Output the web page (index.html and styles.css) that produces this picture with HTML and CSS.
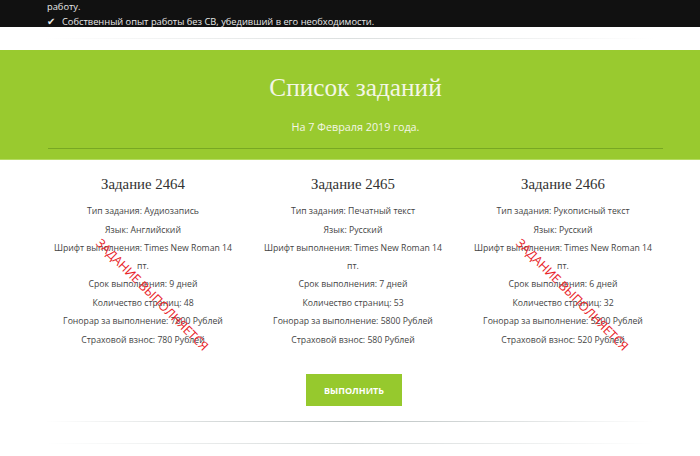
FILE: index.html
```html
<!DOCTYPE html>
<html>
<head>
    <title>Список заданий</title>
    <link rel="stylesheet" href="styles.css">
</head>
<body>
    <div class="top-bar">
        <div class="inner">
            <p class="top-line">работу.</p>
            <p class="top-line"><span class="check">&#10004;</span>Собственный опыт работы без СВ, убедивший в его необходимости.</p>
        </div>
    </div>

    <div class="fade-line top-fade"></div>

    <div class="banner">
        <div class="banner-inner">
            <h1>Список заданий</h1>
            <p class="date">На 7 Февраля 2019 года.</p>
        </div>
    </div>

    <div class="tasks">
        <div class="task">
            <h2>Задание 2464</h2>
            <p>Тип задания: Аудиозапись</p>
            <p>Язык: Английский</p>
            <p>Шрифт выполнения: Times New Roman 14 пт.</p>
            <p>Срок выполнения: 9 дней</p>
            <p>Количество страниц: 48</p>
            <p>Гонорар за выполнение: 7800 Рублей</p>
            <p>Страховой взнос: 780 Рублей</p>
            <div class="stamp">ЗАДАНИЕ ВЫПОЛНЯЕТСЯ</div>
        </div>
        <div class="task">
            <h2>Задание 2465</h2>
            <p>Тип задания: Печатный текст</p>
            <p>Язык: Русский</p>
            <p>Шрифт выполнения: Times New Roman 14 пт.</p>
            <p>Срок выполнения: 7 дней</p>
            <p>Количество страниц: 53</p>
            <p>Гонорар за выполнение: 5800 Рублей</p>
            <p>Страховой взнос: 580 Рублей</p>
        </div>
        <div class="task">
            <h2>Задание 2466</h2>
            <p>Тип задания: Рукописный текст</p>
            <p>Язык: Русский</p>
            <p>Шрифт выполнения: Times New Roman 14 пт.</p>
            <p>Срок выполнения: 6 дней</p>
            <p>Количество страниц: 32</p>
            <p>Гонорар за выполнение: 5200 Рублей</p>
            <p>Страховой взнос: 520 Рублей</p>
            <div class="stamp">ЗАДАНИЕ ВЫПОЛНЯЕТСЯ</div>
        </div>
    </div>

    <div class="actions">
        <button class="btn">ВЫПОЛНИТЬ</button>
    </div>

    <div class="fade-line bottom-fade"></div>
    <div class="fade-line last-fade"></div>
</body>
</html>
```

FILE: styles.css
```css
body {
    margin: 0;
    background-color: #fff;
    font-family: "Open Sans", Arial, sans-serif;
    color: #333;
}

.top-bar {
    background-color: #111;
    height: 27px;
    overflow: hidden;
}

.top-bar .inner {
    margin: 0 0 0 47px;
}

.top-line {
    margin: 0;
    font-size: 9.3px;
    line-height: 14px;
    color: #e8e8e8;
}

.check {
    display: inline-block;
    width: 15px;
    font-size: 10px;
}

.fade-line {
    height: 1px;
    margin: 0 45px;
    background: linear-gradient(to right, rgba(200, 205, 205, 0), #b8bfbf 50%, rgba(200, 205, 205, 0));
}

.top-fade {
    margin-top: 11px;
    margin-bottom: 11px;
    opacity: 0.5;
}

.banner {
    background-color: #99ca2f;
    height: 109px;
    border-bottom: 1px solid #b5db62;
}

.banner-inner {
    margin: 0 37px 0 48px;
    height: 98px;
    border-bottom: 1px solid #78a823;
    text-align: center;
}

.banner h1 {
    margin: 0;
    padding-top: 21px;
    font-family: "Liberation Serif", "DejaVu Serif", serif;
    font-weight: normal;
    font-size: 25.3px;
    line-height: 32px;
    color: #f4f6e6;
}

.date {
    margin: 16px 0 0;
    font-size: 10.8px;
    color: #f4f6e6;
}

.tasks {
    display: flex;
    width: 630px;
    margin: 13px 0 0 38px;
}

.task {
    position: relative;
    width: 180px;
    padding: 0 15px;
    text-align: center;
}

.task h2 {
    margin: 0 0 8px;
    font-family: "Liberation Serif", "DejaVu Serif", serif;
    font-weight: normal;
    font-size: 14.8px;
    line-height: 22px;
    color: #333;
}

.task p {
    margin: 0 0 1px;
    font-size: 8.7px;
    line-height: 17.5px;
    color: #444;
}

.stamp {
    position: absolute;
    left: 24px;
    top: 114px;
    width: 180px;
    font-size: 12.4px;
    line-height: 16px;
    color: #e8242a;
    white-space: nowrap;
    transform: rotate(45deg);
    text-align: center;
}

.actions {
    margin-top: 24px;
    text-align: center;
    padding-left: 8px;
}

.btn {
    background-color: #96c92d;
    color: #fff;
    border: none;
    width: 96px;
    height: 32px;
    font-family: "Open Sans", Arial, sans-serif;
    font-weight: bold;
    font-size: 9px;
    cursor: pointer;
}

.bottom-fade {
    margin-top: 15px;
}

.last-fade {
    margin-top: 21px;
    opacity: 0.6;
}
```
